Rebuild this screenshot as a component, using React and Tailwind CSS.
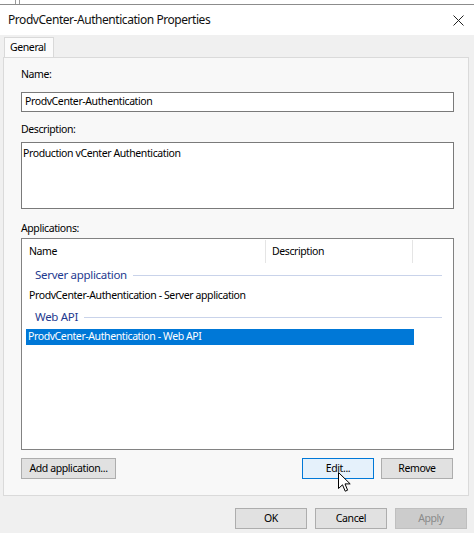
import React from "react";

const Btn = ({ children, className = "" }) => (
    <div
        className={`h-[21px] w-[72px] flex items-center justify-center border whitespace-nowrap ${className}`}
    >
        {children}
    </div>
);

const GroupHeader = ({ label }) => (
    <div className="flex items-center h-[22px] pl-[13px] pr-[11px]">
        <span className="text-[11.5px] tracking-[-0.3px] text-[#1e3a8f] whitespace-nowrap">{label}</span>
        <div className="flex-1 h-px bg-[#c9d3ea] ml-[6px]"></div>
    </div>
);

const Cursor = () => (
    <svg width="13" height="21" viewBox="0 0 13 21" className="absolute left-[338px] top-[472px]">
        <path
            d="M0.5 0.5 L0.5 16.5 L4.5 12.8 L7.2 19.2 L9.6 18.2 L7 11.9 L12.2 11.9 Z"
            fill="#fff"
            stroke="#000"
            strokeWidth="1"
            strokeLinejoin="round"
        />
    </svg>
);

export default function App() {
    return (
        <div className="relative w-[474px] h-[533px] overflow-hidden bg-[#f0f0f0] text-[#000] font-['Segoe_UI','Noto_Sans',sans-serif] text-[10.5px] tracking-[-0.4px]">
            {/* window behind the dialog */}
            <div className="h-[5px] bg-white border-b border-[#8c8c8c] flex">
                <div className="ml-[15px] w-[5px] border-x border-[#9a9a9a]"></div>
            </div>

            {/* title bar */}
            <div className="h-[30px] bg-white flex items-center justify-between pl-[8px] pr-[10px]">
                <span className="text-[12px] tracking-[-0.45px] text-[#111]">ProdvCenter-Authentication Properties</span>
                <svg width="11" height="11" viewBox="0 0 11 11">
                    <path d="M0.5 0.5 L10.5 10.5 M10.5 0.5 L0.5 10.5" stroke="#222" strokeWidth="1" />
                </svg>
            </div>

            {/* tabs */}
            <div className="pl-[4px] pt-[2px] flex">
                <div className="w-[50px] h-[20px] bg-[#fbfbfb] border border-b-0 border-[#d9d9d9] flex items-center pl-[5px]">
                    General
                </div>
            </div>

            {/* tab panel */}
            <div className="ml-[3px] w-[466px] h-[439px] border border-[#dadada] bg-[#f8f8f8] pl-[17px] pr-[14px] pt-[8px] flex flex-col">
                <div className="h-[16px] leading-[16px]">Name:</div>
                <div className="mt-[10px] h-[20px] w-[433px] bg-white border border-[#7a7a7a] flex items-center pl-[3px]">
                    ProdvCenter-Authentication
                </div>
                <div className="mt-[9px] h-[16px] leading-[16px]">Description:</div>
                <div className="mt-[5px] h-[67px] w-[433px] bg-white border border-[#7a7a7a] pl-[1px] pt-[2px] leading-[16px]">
                    Production vCenter Authentication
                </div>
                <div className="mt-[11px] h-[16px] leading-[16px]">Applications:</div>

                {/* list view */}
                <div className="mt-[2px] h-[212px] w-[433px] bg-white border border-[#828282] flex flex-col">
                    <div className="h-[25px] flex">
                        <div className="w-[244px] flex items-center pl-[7px] border-r border-[#e5e5e5] my-[1px]">Name</div>
                        <div className="w-[147px] flex items-center pl-[6px] border-r border-[#e5e5e5] my-[1px]">Description</div>
                    </div>
                    <GroupHeader label="Server application" />
                    <div className="h-[20px] flex items-center pl-[7px]">
                        ProdvCenter-Authentication - Server application
                    </div>
                    <GroupHeader label="Web API" />
                    <div className="ml-[4px] w-[388px] h-[16px] mt-[1px] bg-[#0078d7] text-white flex items-center pl-[2px]">
                        ProdvCenter-Authentication - Web API
                    </div>
                </div>

                <div className="mt-[8px] flex items-center">
                    <div className="h-[21px] w-[95px] flex items-center justify-center whitespace-nowrap bg-[#e1e1e1] border border-[#adadad]">
                        Add application...
                    </div>
                    <Btn className="ml-[186px] bg-[#e5f1fb] border-[#0078d7]">Edit...</Btn>
                    <Btn className="ml-[7px] bg-[#e1e1e1] border-[#adadad]">Remove</Btn>
                </div>
            </div>

            {/* dialog buttons */}
            <div className="flex justify-end pr-[7px] pt-[12px] gap-[8px]">
                <Btn className="bg-[#e1e1e1] border-[#adadad]">OK</Btn>
                <Btn className="bg-[#e1e1e1] border-[#adadad]">Cancel</Btn>
                <Btn className="bg-[#cccccc] border-[#bfbfbf] text-[#8a8a8a]">Apply</Btn>
            </div>

            <Cursor />
        </div>
    );
}
